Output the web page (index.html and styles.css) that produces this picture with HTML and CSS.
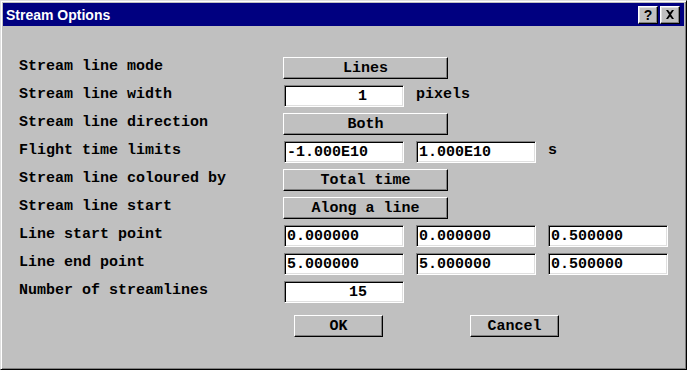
FILE: index.html
```html
<!DOCTYPE html>
<html lang="en">
<head>
    <meta charset="UTF-8">
    <title>Stream Options</title>
    <link rel="stylesheet" href="styles.css">
</head>
<body>
    <div class="window">
        <div class="titlebar">
            <span class="title">Stream Options</span>
            <div class="caption-buttons">
                <button class="cap-btn help">?</button>
                <button class="cap-btn close">
                    <svg width="10" height="9" viewBox="0 0 10 9">
                        <path d="M1 0h2l2 2.5l2-2.5h2l-3 4.5l3 4.5h-2l-2-2.5l-2 2.5h-2l3-4.5z" fill="#000"/>
                    </svg>
                </button>
            </div>
        </div>
        <div class="dialog-body">
            <div class="row">
                <span class="label">Stream line mode</span>
                <button class="choice">Lines</button>
            </div>
            <div class="row">
                <span class="label">Stream line width</span>
                <input class="field num" type="text" value="1">
                <span class="unit">pixels</span>
            </div>
            <div class="row">
                <span class="label">Stream line direction</span>
                <button class="choice">Both</button>
            </div>
            <div class="row">
                <span class="label">Flight time limits</span>
                <input class="field" type="text" value="-1.000E10">
                <input class="field" type="text" value="1.000E10">
                <span class="unit">s</span>
            </div>
            <div class="row">
                <span class="label">Stream line coloured by</span>
                <button class="choice">Total time</button>
            </div>
            <div class="row">
                <span class="label">Stream line start</span>
                <button class="choice">Along a line</button>
            </div>
            <div class="row">
                <span class="label">Line start point</span>
                <input class="field" type="text" value="0.000000">
                <input class="field" type="text" value="0.000000">
                <input class="field" type="text" value="0.500000">
            </div>
            <div class="row">
                <span class="label">Line end point</span>
                <input class="field" type="text" value="5.000000">
                <input class="field" type="text" value="5.000000">
                <input class="field" type="text" value="0.500000">
            </div>
            <div class="row">
                <span class="label">Number of streamlines</span>
                <input class="field num" type="text" value="15">
            </div>
            <div class="actions">
                <button class="push">OK</button>
                <button class="push">Cancel</button>
            </div>
        </div>
    </div>
</body>
</html>
```

FILE: styles.css
```css
html, body {
    margin: 0;
    padding: 0;
    background-color: #c0c0c0;
}
.window {
    width: 687px;
    height: 370px;
    box-sizing: border-box;
    padding: 2px;
    background-color: #c0c0c0;
    border: 1px solid;
    border-color: #dfdfdf #000 #000 #dfdfdf;
    box-shadow: inset 1px 1px #fff, inset -1px -1px #808080;
    font-family: "Liberation Mono", "Courier New", monospace;
    font-weight: bold;
    font-size: 15px;
    color: #000;
}
.titlebar {
    height: 23px;
    background-color: #000080;
    display: flex;
    align-items: center;
    justify-content: space-between;
    padding: 0 4px 0 3px;
}
.title {
    color: #fff;
    font-family: "Liberation Sans", Arial, sans-serif;
    font-weight: bold;
    font-size: 14px;
}
.caption-buttons {
    display: flex;
    gap: 2px;
}
.cap-btn {
    width: 20px;
    height: 18px;
    padding: 0;
    box-sizing: border-box;
    background-color: #c0c0c0;
    border: 1px solid;
    border-color: #fff #000 #000 #fff;
    box-shadow: inset -1px -1px #808080, inset 1px 1px #dfdfdf;
    display: flex;
    align-items: center;
    justify-content: center;
    font-family: "Liberation Sans", Arial, sans-serif;
    font-weight: bold;
    font-size: 14px;
    line-height: 1;
    color: #000;
}
.dialog-body {
    padding: 31px 0 0 16px;
    display: flex;
    flex-direction: column;
    gap: 6px;
}
.row {
    display: flex;
    align-items: center;
    height: 22px;
    gap: 12px;
}
.label {
    width: 252px;
    padding-bottom: 3px;
}
.unit {
    padding-bottom: 3px;
}
.choice, .push {
    height: 22px;
    box-sizing: border-box;
    padding: 0;
    background-color: #c0c0c0;
    border: 1px solid;
    border-color: #fff #000 #000 #fff;
    box-shadow: inset -1px -1px #808080;
    font: inherit;
    color: #000;
}
.choice {
    width: 165px;
}
.field {
    width: 120px;
    height: 22px;
    box-sizing: border-box;
    margin: 0;
    padding: 0 0 0 2px;
    background-color: #fff;
    border: 1px solid;
    border-color: #808080 #fff #fff #808080;
    box-shadow: inset 1px 1px #000, inset -1px -1px #dfdfdf;
    font: inherit;
    color: #000;
    outline: none;
}
.row .field:first-of-type {
    margin-left: 1px;
}
.field.num {
    text-align: right;
    padding-right: 36px;
}
.actions {
    display: flex;
    gap: 87px;
    margin: 6px 0 0 275px;
}
.push {
    width: 89px;
}
```
